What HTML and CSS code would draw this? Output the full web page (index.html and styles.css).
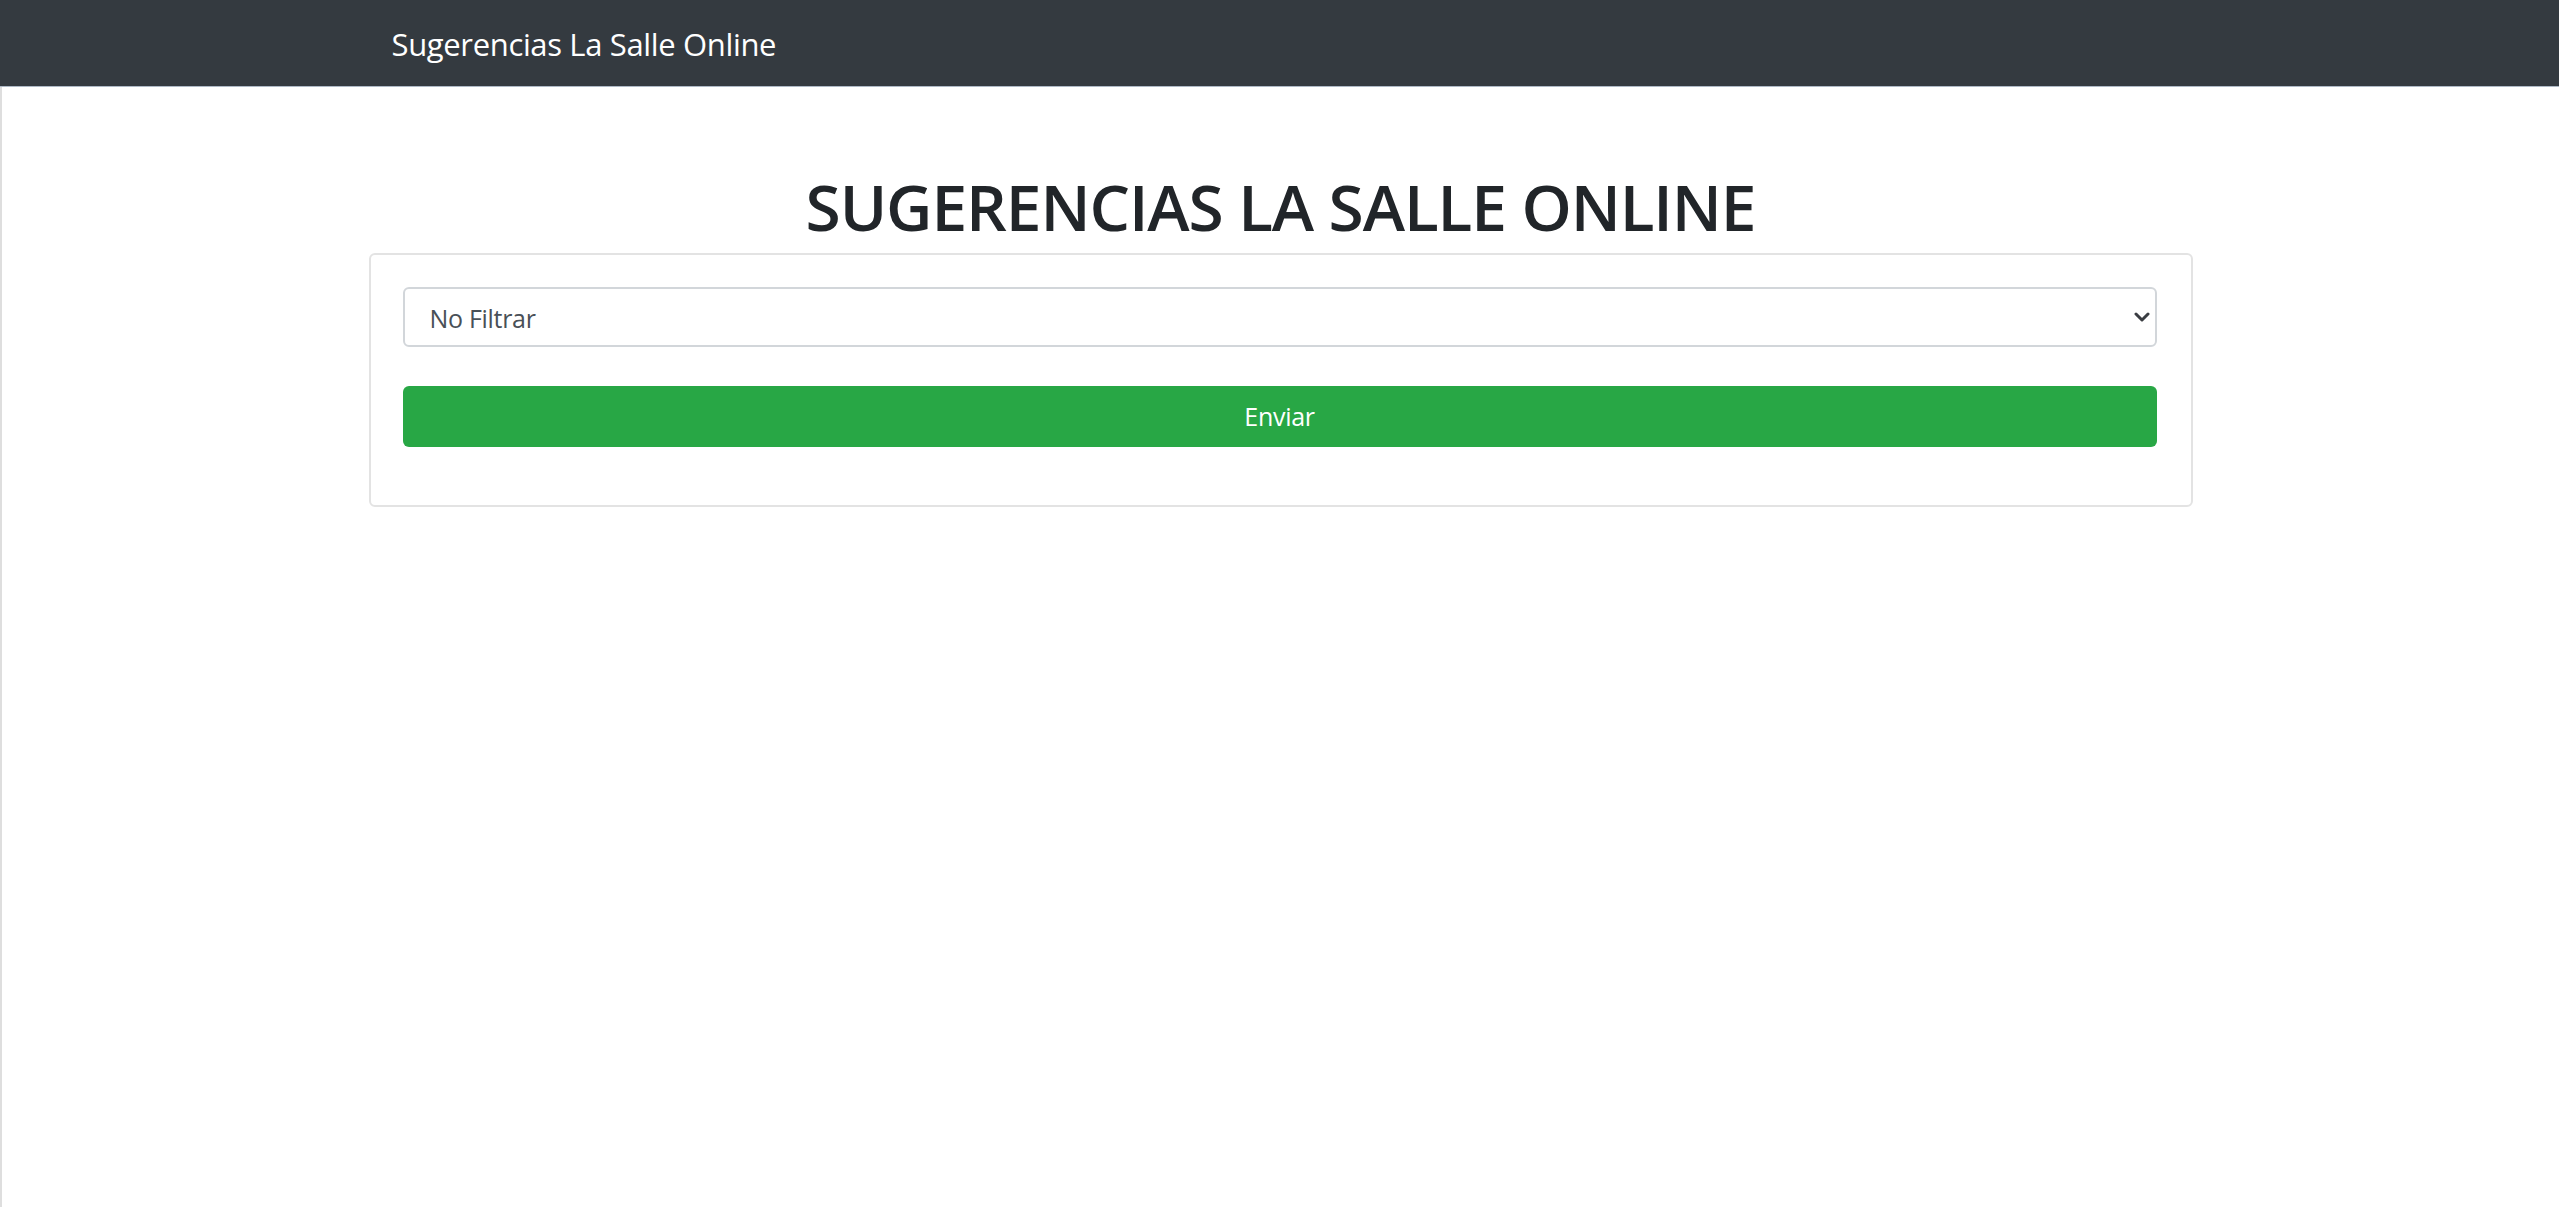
FILE: index.html
```html
<!DOCTYPE html>
<html lang="es">
<head>
<meta charset="utf-8">
<title>Sugerencias La Salle Online</title>
<link rel="stylesheet" href="styles.css">
</head>
<body>
<nav class="navbar">
  <div class="nav-container">
    <a class="brand" href="#">Sugerencias La Salle Online</a>
  </div>
</nav>
<main class="page">
  <div class="container">
    <h1 class="title">SUGERENCIAS LA SALLE ONLINE</h1>
    <div class="card">
      <form class="card-body">
        <div class="select-wrap">
          <select class="form-select">
            <option>No Filtrar</option>
          </select>
          <svg class="chevron" viewBox="0 0 16 10" width="16" height="10" aria-hidden="true">
            <path d="M2 2 L8 8 L14 2" fill="none" stroke="#3a3d42" stroke-width="3" stroke-linecap="round" stroke-linejoin="round"/>
          </svg>
        </div>
        <button type="button" class="btn-success">Enviar</button>
      </form>
    </div>
  </div>
</main>
</body>
</html>
```
FILE: styles.css
```css
html, body {
  margin: 0;
  padding: 0;
  background: #ffffff;
}
body {
  font-family: "Open Sans", "Noto Sans", "Liberation Sans", sans-serif;
  color: #212529;
  height: 1207px;
  overflow: hidden;
  display: flex;
  flex-direction: column;
}
.navbar {
  height: 86px;
  background: #343a40;
  border-bottom: 1px solid #aeb9c6;
  flex: none;
}
.nav-container {
  width: 1872px;
  margin: 0 auto;
  padding: 0 48px;
  box-sizing: border-box;
  height: 100%;
  display: flex;
  align-items: center;
}
.brand {
  color: #ffffff;
  text-decoration: none;
  font-size: 31px;
  letter-spacing: -0.35px;
  line-height: 1;
  padding-top: 2px;
}
.page {
  flex: 1;
  border-left: 2px solid #dedede;
}
.container {
  width: 1824px;
  margin: 0 auto;
  padding-top: 82px;
}
.title {
  margin: 0 0 7px 0;
  text-align: center;
  font-size: 64px;
  font-weight: 600;
  line-height: 1.2;
  letter-spacing: -1.1px;
  color: #212529;
}
.card {
  border: 2px solid #e3e3e3;
  border-radius: 6px;
  background: #fff;
}
.card-body {
  margin: 0;
  padding: 32px 34px 32px 32px;
  display: flex;
  flex-direction: column;
}
.select-wrap {
  position: relative;
}
.form-select {
  appearance: none;
  -webkit-appearance: none;
  width: 100%;
  height: 60px;
  box-sizing: border-box;
  border: 2px solid #d2d6da;
  border-radius: 6px;
  background: #fff;
  padding: 3px 60px 0 25px;
  font-family: inherit;
  font-size: 25px;
  letter-spacing: -0.3px;
  color: #495057;
}
.chevron {
  position: absolute;
  right: 7px;
  top: 25px;
  width: 16px;
  height: 10px;
}
.btn-success {
  margin-top: 39px;
  margin-bottom: 26px;
  height: 61px;
  border: none;
  border-radius: 6px;
  background: #28a745;
  color: #ffffff;
  font-family: inherit;
  font-size: 25px;
  letter-spacing: -0.3px;
  cursor: pointer;
}
```
